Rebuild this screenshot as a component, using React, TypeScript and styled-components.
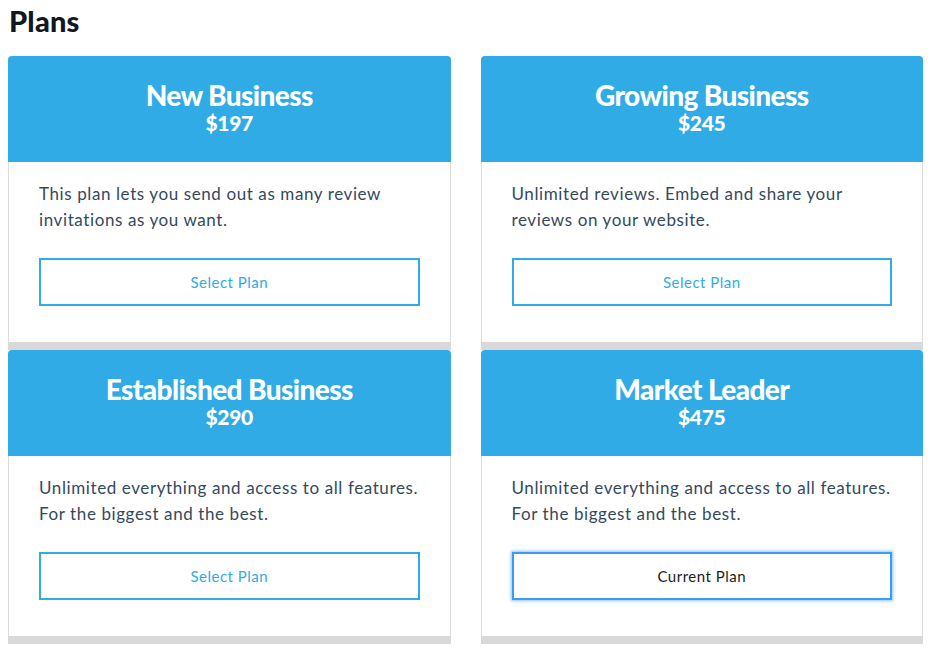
import * as React from 'react'
import styled, { createGlobalStyle } from 'styled-components'

const GlobalStyle = createGlobalStyle`
  html, body {
    margin: 0;
    padding: 0;
    background: #ffffff;
  }
  body {
    font-family: Lato, "Open Sans", sans-serif;
    -webkit-font-smoothing: antialiased;
  }
`

const Page = styled.div`
  padding: 0 9px 0 8px;
`

const Title = styled.h1`
  margin: 0;
  padding: 3px 0 0 1px;
  height: 56px;
  box-sizing: border-box;
  font-size: 29px;
  font-weight: 900;
  letter-spacing: 0.2px;
  color: #111820;
`

const Grid = styled.div`
  display: grid;
  grid-template-columns: 1fr 1fr;
  column-gap: 30px;
`

const Card = styled.div`
  display: flex;
  flex-direction: column;
  border-bottom: 8px solid #d9d9d9;
`

const Header = styled.div`
  background: #31abe6;
  border-radius: 4px 4px 0 0;
  height: 106px;
  padding-bottom: 2px;
  box-sizing: border-box;
  display: flex;
  flex-direction: column;
  align-items: center;
  justify-content: center;
  color: #ffffff;
`

const PlanName = styled.div`
  font-size: 28px;
  font-weight: 900;
  letter-spacing: -0.6px;
  line-height: 30px;
`

const Price = styled.div`
  font-size: 21px;
  font-weight: 900;
  letter-spacing: -0.3px;
  line-height: 26px;
`

const Body = styled.div`
  border: 1px solid #dcdcdc;
  border-top: none;
  border-bottom: none;
  height: 180px;
  box-sizing: border-box;
  padding: 19px 30px 0 30px;
`

const Description = styled.p`
  margin: 0;
  font-size: 17px;
  letter-spacing: 0.6px;
  line-height: 26px;
  color: #34495e;
  height: 52px;
`

const PlanButton = styled.button<{ $current?: boolean }>`
  display: block;
  width: 100%;
  height: 48px;
  margin-top: 25px;
  background: #ffffff;
  font-family: Lato, sans-serif;
  font-size: 15px;
  letter-spacing: 0.5px;
  cursor: pointer;
  border: 2px solid ${p => (p.$current ? '#3a9cf2' : '#31abe6')};
  color: ${p => (p.$current ? '#1d1d1d' : '#31abe6')};
  box-shadow: ${p => (p.$current ? '0 0 3px 1px rgba(58, 156, 242, 0.6)' : 'none')};
`

const plans = [
  {
    name: 'New Business',
    price: '$197',
    text: 'This plan lets you send out as many review invitations as you want.',
  },
  {
    name: 'Growing Business',
    price: '$245',
    text: 'Unlimited reviews. Embed and share your reviews on your website.',
  },
  {
    name: 'Established Business',
    price: '$290',
    text: 'Unlimited everything and access to all features. For the biggest and the best.',
  },
  {
    name: 'Market Leader',
    price: '$475',
    text: 'Unlimited everything and access to all features. For the biggest and the best.',
    current: true,
  },
]

export default function App() {
  return (
    <Page>
      <GlobalStyle />
      <Title>Plans</Title>
      <Grid>
        {plans.map(p => (
          <Card key={p.name}>
            <Header>
              <PlanName>{p.name}</PlanName>
              <Price>{p.price}</Price>
            </Header>
            <Body>
              <Description>{p.text}</Description>
              <PlanButton $current={p.current}>
                {p.current ? 'Current Plan' : 'Select Plan'}
              </PlanButton>
            </Body>
          </Card>
        ))}
      </Grid>
    </Page>
  )
}
